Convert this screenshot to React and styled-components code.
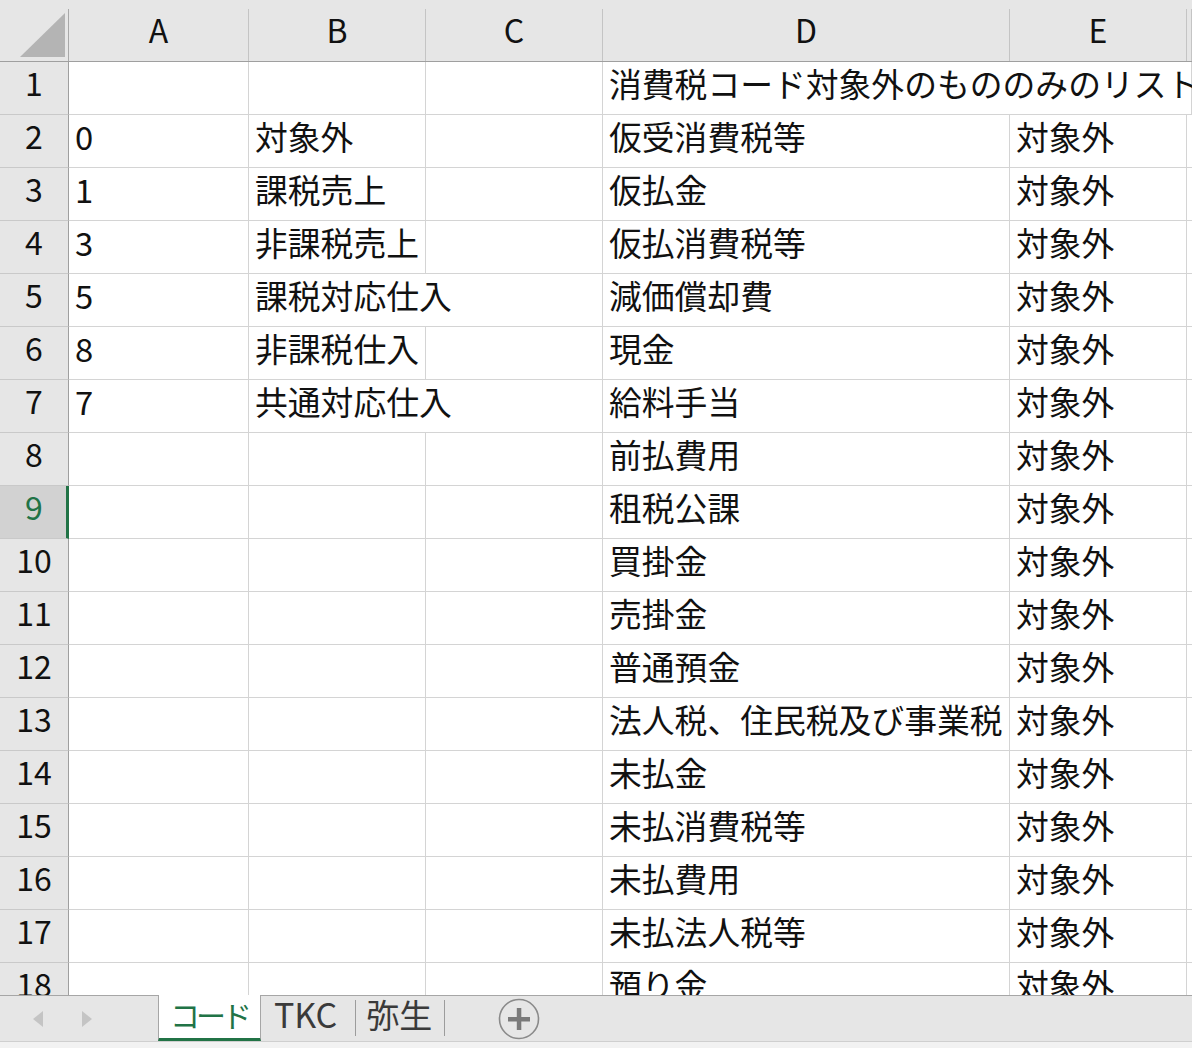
import React from "react";
import styled, { createGlobalStyle, css } from "styled-components";

const GlobalStyle = createGlobalStyle`
  html, body { margin: 0; padding: 0; background: #ffffff; }
  body { font-family: "Noto Sans CJK JP", "Noto Sans", sans-serif; }
  * { box-sizing: border-box; }
`;

const COLS = "69px 180px 177px 177px 407px 177px 1fr";
const GREEN = "#217346";

const Window = styled.div`
  width: 1192px;
  height: 1048px;
  display: flex;
  flex-direction: column;
  overflow: hidden;
  background: #ffffff;
`;

const Sheet = styled.div`
  height: 995px;
  overflow: hidden;
  display: flex;
  flex-direction: column;
`;

const Row = styled.div`
  display: grid;
  grid-template-columns: ${COLS};
  grid-template-rows: minmax(0, 1fr);
  height: 53px;
  flex: none;
`;

const HeaderRow = styled(Row)`
  height: 62px;
  padding-top: 9px;
  background: #e6e6e6;
  border-bottom: 1px solid #9f9f9f;
`;

const Corner = styled.div`
  border-right: 1px solid #a8a8a8;
  display: flex;
  justify-content: flex-end;
  align-items: flex-start;
  padding: 4px 3px 0 0;
`;

const ColHead = styled.div`
  border-right: 1px solid #c4c4c4;
  display: flex;
  align-items: center;
  justify-content: center;
  font-size: 32px;
  color: #111;
  line-height: 1.2;
  padding-bottom: 11px;
`;

const RowHead = styled.div`
  background: #e6e6e6;
  border-right: 1px solid #9f9f9f;
  border-bottom: 1px solid #c9c9c9;
  display: flex;
  align-items: center;
  justify-content: center;
  font-size: 32px;
  line-height: 1.2;
  color: #111;
  padding-bottom: 11px;
  ${(p) =>
    p.$selected &&
    css`
      background: #d2d2d2;
      color: ${GREEN};
      border-right: 3px solid ${GREEN};
      padding-left: 2px;
    `}
`;

const Cell = styled.div`
  grid-column: span ${(p) => p.$span || 1};
  border-right: 1px solid #d4d4d4;
  border-bottom: 1px solid #d4d4d4;
  background: #ffffff;
  display: flex;
  align-items: center;
  min-height: 0;
  padding: 0 0 10px 6px;
  font-size: 32.8px;
  line-height: 1.2;
  color: #111;
  white-space: nowrap;
`;

const TabBar = styled.div`
  flex: 1;
  display: flex;
  flex-direction: column;
  border-top: 1px solid #a6a6a6;
  background: #e6e6e6;
`;

const TabStrip = styled.div`
  height: 45px;
  display: flex;
  align-items: stretch;
`;

const BottomStrip = styled.div`
  flex: 1;
  border-top: 1px solid #cfcfcf;
  background: #f2f2f2;
`;

const Nav = styled.div`
  width: 158px;
  display: flex;
  align-items: center;
  padding-left: 33px;
  gap: 39px;
`;

const Tab = styled.div`
  display: flex;
  align-items: center;
  font-size: ${(p) => p.$size || 32}px;
  line-height: 1.2;
  color: #3a3a3a;
  letter-spacing: ${(p) => p.$ls || 0}px;
  padding: 0 ${(p) => p.$pr || 12}px 8px ${(p) => p.$pl || 12}px;
  ${(p) =>
    p.$active &&
    css`
      background: #ffffff;
      color: ${GREEN};
      border-left: 1px solid #a6a6a6;
      border-right: 1px solid #a6a6a6;
      border-bottom: 3px solid ${GREEN};
      margin-top: -1px;
      padding-bottom: 5px;
    `}
`;

const Sep = styled.div`
  width: 1px;
  background: #9c9c9c;
  margin: 4px 0 5px;
`;

const AddButton = styled.div`
  margin-left: 53px;
  display: flex;
  align-items: center;
`;

const columns = ["A", "B", "C", "D", "E", ""];

const rows = [
  { n: 1, cells: [["", 1], ["", 1], ["", 1], ["消費税コード対象外のもののみのリスト", 3]] },
  { n: 2, cells: [["0"], ["対象外"], [""], ["仮受消費税等"], ["対象外"], [""]] },
  { n: 3, cells: [["1"], ["課税売上"], [""], ["仮払金"], ["対象外"], [""]] },
  { n: 4, cells: [["3"], ["非課税売上"], [""], ["仮払消費税等"], ["対象外"], [""]] },
  { n: 5, cells: [["5"], ["課税対応仕入", 2], ["減価償却費"], ["対象外"], [""]] },
  { n: 6, cells: [["8"], ["非課税仕入"], [""], ["現金"], ["対象外"], [""]] },
  { n: 7, cells: [["7"], ["共通対応仕入", 2], ["給料手当"], ["対象外"], [""]] },
  { n: 8, d: "前払費用" },
  { n: 9, d: "租税公課", selected: true },
  { n: 10, d: "買掛金" },
  { n: 11, d: "売掛金" },
  { n: 12, d: "普通預金" },
  { n: 13, d: "法人税、住民税及び事業税" },
  { n: 14, d: "未払金" },
  { n: 15, d: "未払消費税等" },
  { n: 16, d: "未払費用" },
  { n: 17, d: "未払法人税等" },
  { n: 18, d: "預り金" },
];

function cellsFor(r) {
  if (r.cells) return r.cells;
  return [[""], [""], [""], [r.d], ["対象外"], [""]];
}

export default function App() {
  return (
    <>
      <GlobalStyle />
      <Window>
        <Sheet>
          <HeaderRow>
            <Corner>
              <svg width="45" height="44" viewBox="0 0 45 44">
                <polygon points="45,0 45,44 0,44" fill="#b4b4b4" />
              </svg>
            </Corner>
            {columns.map((c, i) => (
              <ColHead key={i}>{c}</ColHead>
            ))}
          </HeaderRow>
          {rows.map((r) => (
            <Row key={r.n}>
              <RowHead $selected={r.selected}>{r.n}</RowHead>
              {cellsFor(r).map(([text, span], i) => (
                <Cell key={i} $span={span}>
                  {text}
                </Cell>
              ))}
            </Row>
          ))}
        </Sheet>
        <TabBar>
          <TabStrip>
            <Nav>
              <svg width="10" height="16" viewBox="0 0 10 16">
                <polygon points="10,0 10,16 0,8" fill="#c4c4c4" />
              </svg>
              <svg width="10" height="16" viewBox="0 0 10 16">
                <polygon points="0,0 0,16 10,8" fill="#c4c4c4" />
              </svg>
            </Nav>
            <Tab $active $size={30} $ls={-4} $pl={11} $pr={12}>コード</Tab>
            <Tab $pl={13} $pr={18} $size={34}>TKC</Tab>
            <Sep />
            <Tab $pl={10} $pr={12} $size={33}>弥生</Tab>
            <Sep />
            <AddButton>
              <svg width="42" height="42" viewBox="0 0 42 42">
                <circle cx="21" cy="21" r="19.5" fill="none" stroke="#8a8a8a" strokeWidth="1.6" />
                <rect x="10" y="19" width="22" height="4.5" fill="#7a7a7a" />
                <rect x="18.8" y="10" width="4.5" height="22" fill="#7a7a7a" />
              </svg>
            </AddButton>
          </TabStrip>
          <BottomStrip />
        </TabBar>
      </Window>
    </>
  );
}
